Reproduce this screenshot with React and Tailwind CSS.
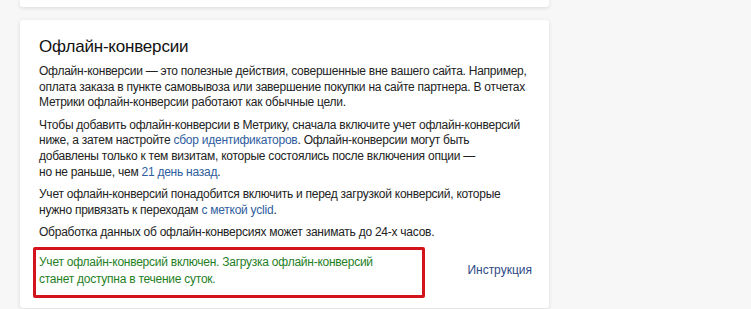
import React from "react";

export default function App() {
  const font = { fontFamily: '"Liberation Sans", Arial, sans-serif' };
  return (
    <div className="w-[751px] h-[309px] overflow-hidden bg-[#f7f7f8] pl-[20px]" style={font}>
      <div className="w-[529px] h-[7px] bg-white rounded-b-[3px] shadow-[0_1px_4px_rgba(0,0,0,0.12)]" />
      <div className="mt-[13px] w-[529px] bg-white rounded-[3px] shadow-[0_1px_4px_rgba(0,0,0,0.12)] pl-[19px] pr-[17px] pt-[17px] pb-[20px] text-[#222] text-[12px] leading-[15.6px] tracking-[-0.25px] whitespace-nowrap">
        <h2 className="text-[17px] leading-[20px] text-[#111] mb-[7px] tracking-[-0.2px]">Офлайн-конверсии</h2>
        <p>
          Офлайн-конверсии — это полезные действия, совершенные вне вашего сайта. Например,<br />
          оплата заказа в пункте самовывоза или завершение покупки на сайте партнера. В отчетах<br />
          Метрики офлайн-конверсии работают как обычные цели.
        </p>
        <p className="mt-[7px]">
          Чтобы добавить офлайн-конверсии в Метрику, сначала включите учет офлайн-конверсий<br />
          ниже, а затем настройте <span className="text-[#2f5d9e]">сбор идентификаторов</span>. Офлайн-конверсии могут быть<br />
          добавлены только к тем визитам, которые состоялись после включения опции —<br />
          но не раньше, чем <span className="text-[#2f5d9e]">21 день назад</span>.
        </p>
        <p className="mt-[7px]">
          Учет офлайн-конверсий понадобится включить и перед загрузкой конверсий, которые<br />
          нужно привязать к переходам <span className="text-[#2f5d9e]">с меткой yclid</span>.
        </p>
        <p className="mt-[7px]">Обработка данных об офлайн-конверсиях может занимать до 24-х часов.</p>
        <div className="mt-[13px] flex items-center justify-between">
          <div className="relative text-[#1f7f1f] leading-[17px]">
            Учет офлайн-конверсий включен. Загрузка офлайн-конверсий<br />
            станет доступна в течение суток.
            <div className="absolute left-[-6px] top-[-7px] w-[392px] h-[51px] border-[3px] border-[#d4141c] rounded-[2px]" />
          </div>
          <span className="text-[#2f4a86] tracking-normal">Инструкция</span>
        </div>
      </div>
    </div>
  );
}
